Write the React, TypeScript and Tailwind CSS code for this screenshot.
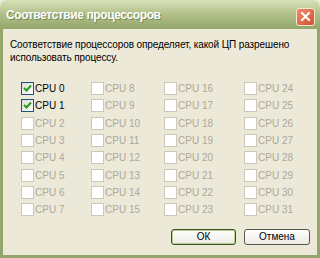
import React from "react";

const cols = [
  { w: "w-[70px]", start: 0 },
  { w: "w-[73px]", start: 8 },
  { w: "w-[80px]", start: 16 },
  { w: "w-[60px]", start: 24 },
];

function CpuBox({ n, checked }: { n: number; checked: boolean }) {
  const enabled = n < 2;
  return (
    <div className="h-[17.3px] flex items-center gap-[1px]">
      <div
        className={
          enabled
            ? "w-[13px] h-[13px] border border-[#1c5180] bg-gradient-to-br from-[#dcdcd7] to-white flex items-center justify-center"
            : "w-[13px] h-[13px] border border-[#cac8bb] bg-white"
        }
      >
        {checked && (
          <svg width="11" height="11" viewBox="0 0 11 11">
            <polyline points="2,5 4.5,7.5 9,2.5" fill="none" stroke="#21a121" strokeWidth="2" />
          </svg>
        )}
      </div>
      <span className={enabled ? "text-black" : "text-[#aca899]"}>CPU {n}</span>
    </div>
  );
}

export default function App() {
  return (
    <div className="w-[320px] h-[258px] flex flex-col overflow-hidden bg-[#ece9d8] font-['Liberation_Sans',sans-serif] text-[10px]">
      {/* title bar */}
      <div className="h-[29px] shrink-0 rounded-t-[7px] bg-gradient-to-b from-[#d8e2b8] via-[#b0bf88] to-[#95a66c] flex items-center justify-between pl-[6px] pr-[5px]">
        <span className="text-white font-bold text-[12px] tracking-[-0.4px] [text-shadow:1px_1px_0_#7a8a55]">
          Соответствие процессоров
        </span>
        <div className="w-[19px] h-[18px] mt-[4px] rounded-[3px] border border-[#f4e7d8] bg-gradient-to-br from-[#ee8a68] to-[#d3512c] flex items-center justify-center">
          <svg width="11" height="11" viewBox="0 0 11 11">
            <path d="M2 2 L9 9 M9 2 L2 9" stroke="white" strokeWidth="2" strokeLinecap="square" />
          </svg>
        </div>
      </div>

      {/* body */}
      <div className="flex-1 flex flex-col border-x-[3px] border-b-[3px] border-[#93a56b]">
        <p className="pt-[9px] pl-[7px] pr-[6px] leading-[13px] tracking-[-0.1px] text-black">
          Соответствие процессоров определяет, какой ЦП разрешено использовать процессу.
        </p>

        <div className="flex mt-[16px] pl-[18px]">
          {cols.map((c) => (
            <div key={c.start} className={`${c.w} flex flex-col`}>
              {Array.from({ length: 8 }, (_, i) => (
                <CpuBox key={i} n={c.start + i} checked={c.start + i < 2} />
              ))}
            </div>
          ))}
        </div>

        <div className="mt-auto mb-[10px] flex justify-end gap-[8px] pr-[7px]">
          <button className="w-[65px] h-[16px] rounded-[3px] border border-[#3d5224] bg-gradient-to-b from-white to-[#ecebe4] shadow-[inset_0_0_0_1px_#b6cf8a] text-black leading-none">
            ОК
          </button>
          <button className="w-[66px] h-[16px] rounded-[3px] border border-[#55584a] bg-gradient-to-b from-white to-[#ecebe4] text-black leading-none">
            Отмена
          </button>
        </div>
      </div>
    </div>
  );
}
